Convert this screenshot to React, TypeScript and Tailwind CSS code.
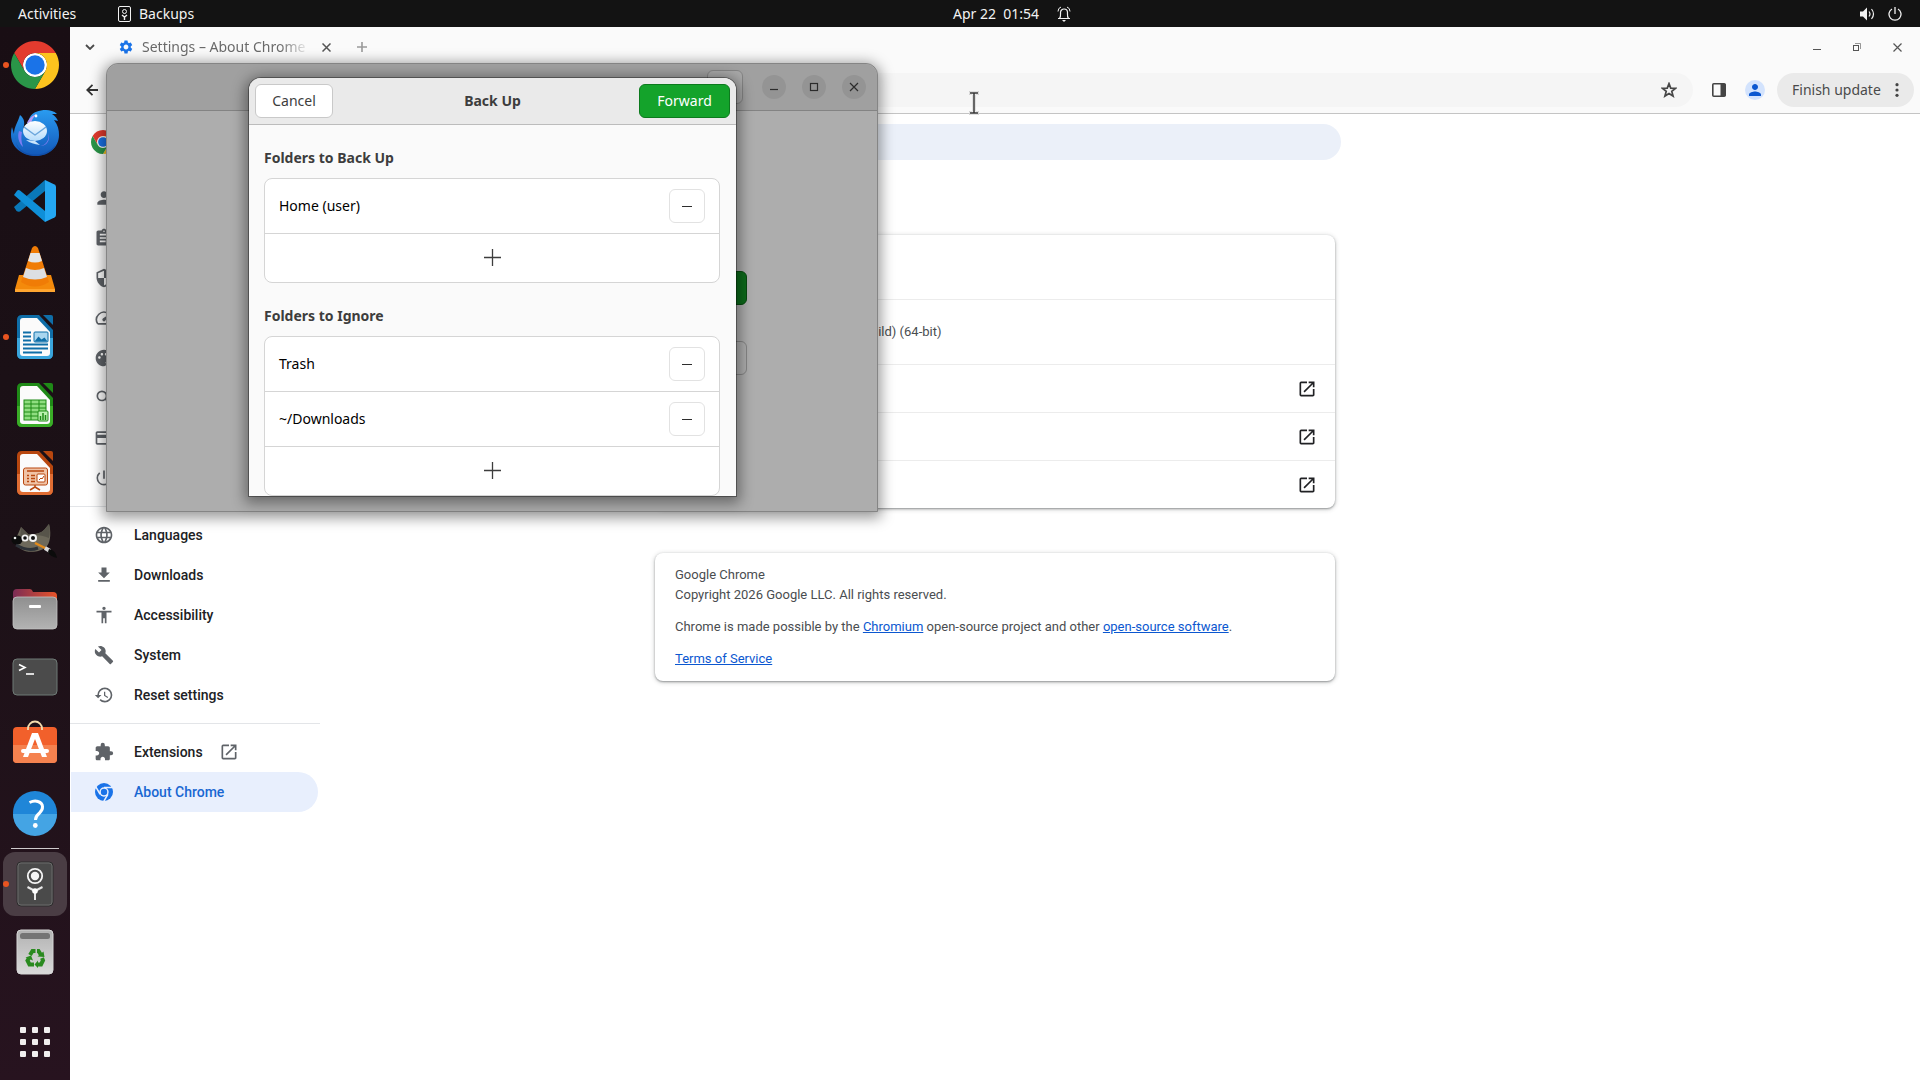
import type { ReactNode } from "react";
import {
  MdAccessibility,
  MdAssignment,
  MdBuild,
  MdCreditCard,
  MdExtension,
  MdFileDownload,
  MdHistory,
  MdLanguage,
  MdOpenInNew,
  MdOutlineSpeed,
  MdPalette,
  MdPerson,
  MdPowerSettingsNew,
  MdSearch,
  MdSecurity,
  MdSettings,
} from "react-icons/md";

/* ---------- Drawings ---------- */

function ChromeLogo({ className }: { className: string }) {
  return (
    <svg viewBox="0 0 48 48" className={className} aria-hidden="true">
      <circle cx="24" cy="24" r="12" fill="#fff" />
      <path d="M24,12H44.78a24,24,0,0,0-41.56,0L13.61,30A12,12,0,0,1,24,12Z" fill="#e33b2e" />
      <path d="M34.39,30,24,48A24,24,0,0,0,44.78,12H24A12,12,0,0,1,34.39,30Z" fill="#fcc31e" />
      <path d="M13.61,30,3.22,12A24,24,0,0,0,24,48L34.39,30a12,12,0,0,1-20.78,0Z" fill="#2a9648" />
      <circle cx="24" cy="24" r="9.7" fill="#1a73e8" />
    </svg>
  );
}

function ChromeMono() {
  return (
    <svg viewBox="0 0 48 48" className="size-[18px]" aria-hidden="true">
      <circle cx="24" cy="24" r="24" fill="#1a73e8" />
      <circle cx="24" cy="24" r="12.5" fill="#e8effd" />
      <path d="M24 12H46M34.4 30L23.4 49M13.6 30L2.6 11" stroke="#e8effd" strokeWidth="4" />
      <circle cx="24" cy="24" r="8.5" fill="#1a73e8" />
    </svg>
  );
}

function ThunderbirdIcon() {
  return (
    <svg viewBox="0 0 48 48" className="size-12">
      <defs>
        <linearGradient id="tb" x1="0" y1="0" x2="0" y2="1">
          <stop offset="0" stopColor="#2a9bf0" />
          <stop offset="1" stopColor="#1257b8" />
        </linearGradient>
        <linearGradient id="tbEnv" x1="0" y1="0" x2="0" y2="1">
          <stop offset="0" stopColor="#ffffff" />
          <stop offset="1" stopColor="#b5dcfb" />
        </linearGradient>
      </defs>
      <path d="M9 6c5 4 5 9 3 14 4-3 5-8 7-12C22 3 28 1 35 1c4 0 8 1 11 4l-5 0c3 2 5 4 6 7l-4-1c4 5 5 10 5 15 0 12-10 21-23 21C11 47 0 38 0 26c0-2 0-5 1-8l2 7C3 18 7 13 9 6z" fill="url(#tb)" />
      <path d="M5 26c-2 9 4 17 14 19 9 2 20-1 26-10-3 8-11 12-21 12C12 47 3 39 5 26z" fill="#0f4aa3" opacity=".65" />
      <path d="M16 14c2-5 6-8 10-9-4 3-5 6-6 9z" fill="#b89cf5" />
      <path d="M8 22c-2 6 0 12 4 16-2-6-2-10-1-15z" fill="#7c7df2" />
      <path d="M29 37c7-1 10-7 8-14 3 8-1 14-8 14z" fill="#8b7df4" />
      <ellipse cx="24" cy="22" rx="12" ry="10" fill="url(#tbEnv)" />
      <path d="M13 18c4 3 8 6 11 8 3-2 7-5 11-8" fill="none" stroke="#6ba6dc" strokeWidth="1.500" />
      <path d="M15 31c4 3 8 4 14 5l-5-4z" fill="#c9e5fb" />
      <circle cx="25" cy="7" r="1.400" fill="#fff" />
    </svg>
  );
}

function VsCodeIcon() {
  return (
    <svg viewBox="0 0 42 42" className="size-[42px]">
      <path d="M31 0 0 27l2.500 4q1.500 1 3.500.5L31 11z" fill="#0a78b8" />
      <path d="M6 10.400 31 31v11L0 15l2.500-3.500Q4 9.500 6 10.400z" fill="#0f8fd8" />
      <path d="M31 0 40.500 4.500Q42 5.300 42 7V35q0 1.700-1.500 2.500L31 42z" fill="#24a7f2" />
    </svg>
  );
}

function VlcIcon() {
  return (
    <svg viewBox="0 0 42 48" className="h-12 w-[42px]">
      <path d="M5 30h32l4 14q0 3-3 3H4q-3 0-3-3z" fill="#f48a0b" />
      <path d="M1 44h40v3H1z" fill="#ffa630" />
      <path d="M7 37 18 3q3-4 6 0l11 34q-14 9-28 0z" fill="#f07c06" />
      <path d="M16.500 8h9l2.500 8q-7 3-14 0z" fill="#e4e6e8" />
      <path d="M12 23q9 4 18 0l3 9q-12 5-24 0z" fill="#dcdfe2" />
    </svg>
  );
}

function LibreIcon({ color, light, children }: { color: string; light: string; children: ReactNode }) {
  return (
    <svg viewBox="0 0 38 46" className="h-[46px] w-[38px]">
      <path d="M6 1H23L37 16V40q0 5-5 5H6q-5 0-5-5V6q0-5 5-5z" fill={color} />
      <path d="M1 24H37V40q0 5-5 5H6q-5 0-5-5z" fill={light} />
      <path d="M7 4H21L34 18V39q0 3-3 3H7q-3 0-3-3V7q0-3 3-3z" fill="#fbfbfb" />
      <path d="M27 1H35q2 0 2 2V11z" fill={color} />
      {children}
    </svg>
  );
}

function WriterIcon() {
  return (
    <LibreIcon color="#0f6ea8" light="#3aa5dc">
      <path d="M7 18.500h8M7 22.500h8M7 26.500h8M7 30.500h25M7 34.500h25M7 38.500h19" stroke="#0f6ea8" strokeWidth="2" />
      <rect x="18" y="18" width="14" height="10" rx="1" fill="#a9d6ef" stroke="#0f6ea8" />
      <path d="M18.500 27.500l4-5 3 3 3-2 3 4z" fill="#0f6ea8" />
    </LibreIcon>
  );
}

function CalcIcon() {
  return (
    <LibreIcon color="#1f8a17" light="#3aad27">
      <rect x="8" y="18" width="22" height="20" fill="#8fdd80" stroke="#1f8a17" />
      <path d="M8 22h22M8 26h22M8 30h22M8 34h22M15 18v20M23 18v20" stroke="#1f8a17" />
      <rect x="22" y="29" width="10" height="10" rx="1" fill="#baf0ae" stroke="#1f8a17" />
      <path d="M24.500 38v-4M27 38v-7M29.500 38v-5" stroke="#1f8a17" strokeWidth="1.500" />
    </LibreIcon>
  );
}

function ImpressIcon() {
  return (
    <LibreIcon color="#b8470f" light="#e06d33">
      <rect x="7.500" y="18" width="24" height="17" rx="2" fill="#f0c3a6" stroke="#b8470f" />
      <path d="M11 21h17M11 25.500h2M11 28.500h2M11 31.500h2M15 25.500h4M15 28.500h4M15 31.500h4" stroke="#b8470f" strokeWidth="1.500" />
      <rect x="21" y="24" width="8" height="8" rx="1" fill="#fff" stroke="#b8470f" />
      <path d="M23 30l2-2 1 1 2-3" stroke="#b8470f" fill="none" />
      <path d="M19 35v2l-5 3M19 37l5 3" stroke="#b8470f" fill="none" strokeWidth="1.500" />
    </LibreIcon>
  );
}

function GimpIcon() {
  return (
    <svg viewBox="0 0 48 36" className="h-9 w-12">
      <path d="M10 4l7 7c5 1 12 0 16-4l5-6c2 7 2 17-2 22-5 6-19 8-26 3-5-3-6-11-3-15z" fill="#6d695b" />
      <path d="M10 4l7 7c5 1 12 0 16-4l5-6c1 5 1 10 0 14-9-4-20-4-29 0z" fill="#57544a" />
      <ellipse cx="6" cy="17" rx="5.500" ry="4.500" fill="#0c0c0c" />
      <circle cx="4" cy="15" r="1.300" fill="#eee" />
      <circle cx="14" cy="15" r="3.500" fill="#f3f3f3" />
      <circle cx="22" cy="15" r="4" fill="#f3f3f3" />
      <circle cx="14" cy="15" r="1.800" fill="#111" />
      <circle cx="22" cy="15" r="2" fill="#111" />
      <path d="M5 22q12 7 22 3" fill="none" stroke="#2d3238" strokeWidth="3" />
      <path d="M24 20l12 6" stroke="#e28a1b" strokeWidth="2.500" />
      <path d="M34 25l5 3" stroke="#d9d9d9" strokeWidth="4" />
      <path d="M38 26c5 1 7 4 8 9-5-1-8-3-9-6z" fill="#0b0b0b" />
    </svg>
  );
}

function FilesIcon() {
  return (
    <svg viewBox="0 0 46 42" className="h-[42px] w-[46px]">
      <defs>
        <linearGradient id="fback" x1="0" x2="1">
          <stop offset="0" stopColor="#7b2c55" />
          <stop offset="1" stopColor="#e8542a" />
        </linearGradient>
        <linearGradient id="ffront" x1="0" x2="0" y1="0" y2="1">
          <stop offset="0" stopColor="#8f8f8f" />
          <stop offset="1" stopColor="#b3b3b3" />
        </linearGradient>
      </defs>
      <path d="M1 16V5q0-4 4-4h13q2 0 3 3h20q4 0 4 4v9z" fill="url(#fback)" />
      <rect x="1" y="9" width="44" height="32" rx="4" fill="url(#ffront)" stroke="#c3c3c3" strokeWidth=".8" />
      <rect x="17" y="17" width="12" height="3" rx="1" fill="#fff" />
    </svg>
  );
}

function TerminalIcon() {
  return (
    <svg viewBox="0 0 46 38" className="h-[38px] w-[46px]">
      <rect x="1" y="1" width="44" height="36" rx="4" fill="#4b4b4b" stroke="#6f7a76" />
      <path d="M7 6.500l6 3-6 3" fill="none" stroke="#fff" strokeWidth="1.600" />
      <path d="M14 16h8" stroke="#fff" strokeWidth="1.600" />
    </svg>
  );
}

function SoftwareIcon() {
  return (
    <svg viewBox="0 0 46 44" className="mb-1.5 h-[44px] w-[46px]">
      <rect x="1" y="7" width="44" height="36" rx="4" fill="#f2602b" />
      <path d="M1 25h44v14q0 4-4 4H5q-4 0-4-4z" fill="#f5824f" />
      <path d="M16 10V8.500a7 7 0 0 1 14 0V10" fill="none" stroke="#f3dcae" strokeWidth="1.800" />
      <path d="M20 13h6l9 24h-5l-7-18-7 18h-5z" fill="#fff" />
      <rect x="9" y="29" width="28" height="4" rx="2" fill="#fff" />
    </svg>
  );
}

function HelpIcon() {
  return (
    <svg viewBox="0 0 46 46" className="size-[46px]">
      <circle cx="23" cy="23" r="22" fill="#1f86d8" />
      <path d="M1 24h44a22 22 0 0 1-44 0z" fill="#44a4e4" />
      <path d="M17.500 12.500q5-2.500 8.500-1c6 2 5.500 8 1.500 11.500-3 2.500-4 4-4 7" fill="none" stroke="#fff" strokeWidth="3" />
      <circle cx="23.300" cy="35.500" r="2.400" fill="#fff" />
    </svg>
  );
}

function SafeIcon() {
  return (
    <svg viewBox="0 0 38 46" className="h-[46px] w-[38px]">
      <rect x="1" y="1" width="36" height="44" rx="4" fill="#4a4a4a" stroke="#2c2c2c" />
      <rect x="2" y="2" width="34" height="42" rx="3" fill="none" stroke="#6a6a6a" />
      <circle cx="19" cy="15" r="7.200" fill="none" stroke="#f5f5f5" strokeWidth="1.800" />
      <circle cx="19" cy="15" r="4.200" fill="#f5f5f5" />
      <path d="M11.500 26l7.500 4 7.500-4M19 30v9" fill="none" stroke="#e6e6e6" strokeWidth="2" />
      <circle cx="19" cy="30" r="2.800" fill="#fff" />
    </svg>
  );
}

function TrashIcon() {
  return (
    <svg viewBox="0 0 38 46" className="h-[46px] w-[38px]">
      <defs>
        <linearGradient id="bin" x1="0" x2="0" y1="0" y2="1">
          <stop offset="0" stopColor="#b2b2b2" />
          <stop offset="1" stopColor="#dadada" />
        </linearGradient>
      </defs>
      <rect x="1" y="1" width="36" height="44" rx="4" fill="url(#bin)" stroke="#d6d6d6" />
      <rect x="4" y="4" width="30" height="6" rx="2.500" fill="#747474" />
      <g fill="none" stroke="#2a8a1f" strokeWidth="4">
        <path d="M14 26l2.500-4h3" />
        <path d="M21 22h1.500l2.500 4" />
        <path d="M26 29l1 2.500-2 4h-3" />
        <path d="M18 35.500h-4.500l-2-4 1.500-2.500" />
      </g>
      <path d="M21.500 27.500l7 .5-1-5.500zM22 31.500v7.500l-3.500-3.500zM9.500 28.500l5.500-2 2 5z" fill="#2a8a1f" />
    </svg>
  );
}

/* ---------- Dock ---------- */

type DockEntry = { name: string; icon: ReactNode; running?: boolean; focused?: boolean };

const pinned: DockEntry[] = [
  { name: "Google Chrome", icon: <ChromeLogo className="size-12" />, running: true },
  { name: "Thunderbird Mail", icon: <ThunderbirdIcon /> },
  { name: "Visual Studio Code", icon: <VsCodeIcon /> },
  { name: "VLC media player", icon: <VlcIcon /> },
  { name: "LibreOffice Writer", icon: <WriterIcon />, running: true },
  { name: "LibreOffice Calc", icon: <CalcIcon /> },
  { name: "LibreOffice Impress", icon: <ImpressIcon /> },
  { name: "GIMP", icon: <GimpIcon /> },
  { name: "Files", icon: <FilesIcon /> },
  { name: "Terminal", icon: <TerminalIcon /> },
  { name: "Software", icon: <SoftwareIcon /> },
  { name: "Help", icon: <HelpIcon /> },
];

const unpinned: DockEntry[] = [
  { name: "Backups", icon: <SafeIcon />, running: true, focused: true },
  { name: "Trash", icon: <TrashIcon /> },
];

function DockButton({ entry }: { entry: DockEntry }) {
  return (
    <div className="relative flex h-[68px] w-full items-center justify-center">
      <button
        aria-label={entry.name}
        className={
          entry.focused
            ? "flex size-16 items-center justify-center rounded-xl bg-[#4a3d44]"
            : "flex size-16 items-center justify-center rounded-xl"
        }
      >
        {entry.icon}
      </button>
      {entry.running && <span className="absolute left-[3px] size-1.5 rounded-full bg-[#e95420]" />}
    </div>
  );
}

function Dock() {
  return (
    <nav aria-label="Dock" className="flex w-[70px] shrink-0 flex-col items-center bg-linear-to-b from-[#190e14] via-[#1c1117] to-[#27131f] pt-1 pb-1">
      {pinned.map((e) => (
        <DockButton key={e.name} entry={e} />
      ))}
      <div className="mt-px mb-px h-px w-12 shrink-0 bg-[#cfcbcd]" />
      {unpinned.map((e) => (
        <DockButton key={e.name} entry={e} />
      ))}
      <button aria-label="Show Applications" className="mt-auto grid size-[68px] shrink-0 grid-cols-[6px_6px_6px] place-content-center gap-1.5">
        {Array.from({ length: 9 }, (_, i) => (
          <span key={i} className="size-1.5 rounded-[1px] bg-[#f0eeee]" />
        ))}
      </button>
    </nav>
  );
}

/* ---------- Top bar ---------- */

function TopBar() {
  return (
    <header className="grid h-[27px] shrink-0 grid-cols-[1fr_auto_1fr] items-center bg-[#131313] text-sm text-[#f2f2f2]">
      <div className="flex items-center pl-[18px]">
        <button className="w-[100px] text-left">Activities</button>
        <button className="flex items-center gap-2">
          <svg viewBox="0 0 13 16" className="h-4 w-[13px]" fill="none" stroke="#f2f2f2">
            <rect x=".5" y=".5" width="12" height="15" rx="1.500" />
            <circle cx="6.500" cy="5.500" r="2" />
            <path d="M4 9l2.500 2L9 9M6.500 11v3" strokeWidth="1.400" />
          </svg>
          Backups
        </button>
      </div>
      <button className="flex items-center gap-[18px] pl-[104px]">
        <span className="whitespace-pre">Apr 22  01:54</span>
        <svg viewBox="0 0 14 16" className="h-4 w-3.5" fill="none" stroke="#f2f2f2">
          <path d="M1 12.500h12M2.500 12.500C4 11 3.500 8 3.500 6.500a3.500 3.500 0 0 1 7 0c0 1.500-.5 4.500 1 6" strokeWidth="1.200" />
          <path d="M1 5.500Q1 2 4 1M13 5.500Q13 2 10 1" />
          <path d="M5 14h4l-2 2z" fill="#f2f2f2" stroke="none" />
        </svg>
      </button>
      <div className="flex items-center justify-end gap-[13px] pr-[18px]">
        <svg viewBox="0 0 15 14" className="h-3.5 w-[15px]">
          <path d="M0 4.500h3L7 .5v13l-4-4H0z" fill="#f2f2f2" />
          <path d="M9 4.500q2 2.500 0 5M11.500 2q4 5 0 10" fill="none" stroke="#f2f2f2" strokeWidth="1.200" />
        </svg>
        <svg viewBox="0 0 14 14" className="size-3.5" fill="none" stroke="#f2f2f2" strokeWidth="1.300">
          <path d="M4 2a6 6 0 1 0 6 0M7 0v7" />
        </svg>
      </div>
    </header>
  );
}

/* ---------- Browser ---------- */

function TabStrip() {
  return (
    <div className="flex h-10 items-center pr-[3px]">
      <button aria-label="Search tabs" className="ml-2 flex w-6 justify-center">
        <svg viewBox="0 0 10 6" className="h-1.5 w-2.5" fill="none" stroke="#4a4a4a" strokeWidth="1.800">
          <path d="M1 1l4 4 4-4" />
        </svg>
      </button>
      <div className="ml-4 flex items-center">
        <MdSettings className="size-4 text-[#1a73e8]" />
        <span className="ml-2 w-[168px] overflow-hidden text-sm whitespace-nowrap text-[#6a6a6a] [mask-image:linear-gradient(to_right,black_82%,transparent)]">
          Settings – About Chrome
        </span>
        <button aria-label="Close tab" className="ml-2 flex w-4 justify-center">
          <svg viewBox="0 0 9 9" className="size-[9px]" stroke="#555" strokeWidth="1.500">
            <path d="M.5.500l8 8M8.500.500l-8 8" />
          </svg>
        </button>
      </div>
      <button aria-label="New tab" className="ml-[23px]">
        <svg viewBox="0 0 10 10" className="size-2.5" stroke="#9a9a9a" strokeWidth="1.600">
          <path d="M5 0v10M0 5h10" />
        </svg>
      </button>
      <div className="ml-auto flex">
        <button aria-label="Minimize" className="flex size-10 items-center justify-center">
          <svg viewBox="0 0 10 10" className="size-2.5" stroke="#555">
            <path d="M1 7.500h8" />
          </svg>
        </button>
        <button aria-label="Restore" className="flex size-10 items-center justify-center">
          <svg viewBox="0 0 10 10" className="size-2.5" fill="none" stroke="#555">
            <rect x="1.500" y="3.500" width="5" height="5" />
            <path d="M3 1.500h5.500V7" strokeOpacity=".6" />
          </svg>
        </button>
        <button aria-label="Close window" className="flex size-10 items-center justify-center">
          <svg viewBox="0 0 9 9" className="size-[9px]" stroke="#555" strokeWidth="1.200">
            <path d="M.5.500l8 8M8.500.500l-8 8" />
          </svg>
        </button>
      </div>
    </div>
  );
}

function Toolbar() {
  return (
    <div className="flex h-[47px] items-center border-b border-[#c4c4c4] pr-1.5">
      <button aria-label="Back" className="ml-4 flex">
        <svg viewBox="0 0 12 12" className="size-3" fill="none" stroke="#333" strokeWidth="1.800">
          <path d="M12 6H1M6.500.800L1.200 6l5.300 5.200" />
        </svg>
      </button>
      <div className="ml-[100px] flex h-[34px] flex-1 items-center rounded-full bg-[#f5f5f5] pr-4">
        <input aria-label="Address bar" className="min-w-0 flex-1 bg-transparent outline-none" />
        <button aria-label="Bookmark this tab">
          <svg viewBox="0 0 24 24" className="size-4" fill="none" stroke="#474747" strokeWidth="2.600">
            <path d="M12 2.500l2.600 6.700 7.200.4-5.600 4.500 1.900 7L12 17.200 5.900 21.100l1.900-7L2.200 9.600l7.200-.4z" />
          </svg>
        </button>
      </div>
      <button aria-label="Side panel" className="ml-[19px]">
        <svg viewBox="0 0 14 14" className="size-3.5">
          <rect x=".8" y=".8" width="12.400" height="12.400" rx="1" fill="none" stroke="#444" strokeWidth="1.600" />
          <path d="M8.500 1h5v12h-5z" fill="#444" />
        </svg>
      </button>
      <button aria-label="Profile" className="ml-[19px] flex size-5 items-center justify-center rounded-full bg-[#d3e3fd]">
        <MdPerson className="size-[18px] text-[#0b57d0]" />
      </button>
      <button className="ml-3 flex h-[34px] w-[137px] items-center justify-between rounded-full bg-[#eaeaea] px-[15px] text-sm text-[#4a4a4a]">
        Finish update
        <svg viewBox="0 0 4 14" className="h-3.5 w-1" fill="#444">
          <circle cx="2" cy="1.700" r="1.600" />
          <circle cx="2" cy="7" r="1.600" />
          <circle cx="2" cy="12.300" r="1.600" />
        </svg>
      </button>
    </div>
  );
}

const coveredItems = [
  { label: "You and Google", Icon: MdPerson },
  { label: "Autofill and passwords", Icon: MdAssignment },
  { label: "Privacy and security", Icon: MdSecurity },
  { label: "Performance", Icon: MdOutlineSpeed },
  { label: "Appearance", Icon: MdPalette },
  { label: "Search engine", Icon: MdSearch },
  { label: "Default browser", Icon: MdCreditCard },
  { label: "On startup", Icon: MdPowerSettingsNew },
];

const advancedItems = [
  { label: "Languages", Icon: MdLanguage },
  { label: "Downloads", Icon: MdFileDownload },
  { label: "Accessibility", Icon: MdAccessibility },
  { label: "System", Icon: MdBuild },
  { label: "Reset settings", Icon: MdHistory },
];

function SettingsMenu() {
  return (
    <aside className="w-[266px] shrink-0 font-[Roboto,sans-serif] text-sm font-medium text-[#202124]">
      <div className="flex h-14 items-center pl-[21px]">
        <ChromeLogo className="size-6" />
      </div>
      <nav aria-label="Settings" className="pt-2">
        {coveredItems.map(({ label, Icon }) => (
          <a key={label} href="#" aria-label={label} className="flex h-10 items-center pl-6">
            <Icon className="size-5 text-[#5f6368]" />
          </a>
        ))}
        <hr className="my-2 w-[250px] border-[#e3e5e8]" />
        {advancedItems.map(({ label, Icon }) => (
          <a key={label} href="#" className="flex h-10 items-center gap-5 pl-6">
            <Icon className="size-5 text-[#5f6368]" />
            {label}
          </a>
        ))}
        <hr className="my-2 w-[250px] border-[#e3e5e8]" />
        <a href="#" className="flex h-10 items-center gap-5 pl-6">
          <MdExtension className="size-5 text-[#5f6368]" />
          Extensions
          <MdOpenInNew className="-ml-1 size-5 text-[#5f6368]" />
        </a>
        <a href="#" className="ml-px flex h-10 w-[247px] items-center gap-[21px] rounded-r-full bg-[#e8effd] pl-6 text-[#1967d2]">
          <ChromeMono />
          About Chrome
        </a>
      </nav>
    </aside>
  );
}

const cardClass = "w-full rounded-lg bg-white shadow-[0_1px_2px_0_rgba(60,64,67,0.45),0_1px_4px_1px_rgba(60,64,67,0.2)]";

function AboutPage() {
  return (
    <main className="flex min-w-0 flex-1 flex-col items-center pt-2.5 font-[Roboto,sans-serif] text-[13px]/5 text-[#4a4d50]">
      <input aria-label="Search settings" className="h-9 w-full max-w-[692px] rounded-full bg-[#ebf0f9] px-5 outline-none" />
      <div className="mt-[75px] flex w-full max-w-[680px] flex-col gap-[45px]">
        <section className={cardClass}>
          <div className="h-16" />
          <div className="flex h-[65px] items-center border-t border-[#ececec] pl-40">(Official Build) (64-bit)</div>
          {["Get help with Chrome", "Report an issue", "Privacy policy"].map((label) => (
            <a key={label} href="#" aria-label={label} className="flex h-12 items-center justify-end border-t border-[#ececec] pr-[18px]">
              <MdOpenInNew className="size-5 text-[#202124]" />
            </a>
          ))}
        </section>
        <section className={cardClass + " flex flex-col gap-3 px-5 py-3"}>
          <p>
            Google Chrome
            <br />
            Copyright 2026 Google LLC. All rights reserved.
          </p>
          <p>
            Chrome is made possible by the{" "}
            <a href="#" className="text-[#0b57d0] underline">Chromium</a> open-source project and other{" "}
            <a href="#" className="text-[#0b57d0] underline">open-source software</a>.
          </p>
          <p>
            <a href="#" className="text-[#0b57d0] underline">Terms of Service</a>
          </p>
        </section>
      </div>
    </main>
  );
}

function Browser() {
  return (
    <div className="flex min-w-0 flex-1 flex-col bg-white">
      <div className="bg-[#fafafa]">
        <TabStrip />
        <Toolbar />
      </div>
      <div className="flex flex-1">
        <SettingsMenu />
        <AboutPage />
        <div className="w-[266px] shrink" />
      </div>
    </div>
  );
}

/* ---------- Backups ---------- */

function WindowControl({ label, children }: { label: string; children: ReactNode }) {
  return (
    <button aria-label={label} className="flex size-6 items-center justify-center rounded-full bg-[#949494]">
      <svg viewBox="0 0 10 10" className="size-2.5" fill="none" stroke="#2c2c2c" strokeWidth="1.200">
        {children}
      </svg>
    </button>
  );
}

function BackupsWindow() {
  return (
    <section
      aria-label="Backups"
      className="absolute top-[63px] left-[106px] flex h-[449px] w-[772px] flex-col rounded-t-xl border border-[#858585] bg-[#adadad] shadow-[0_3px_14px_3px_rgba(0,0,0,0.4)]"
    >
      <header className="flex h-[47px] shrink-0 items-center justify-end gap-4 rounded-t-xl border-b border-[#838383] bg-[#a0a0a0] pr-[11px]">
        <button aria-label="Main menu" className="mr-[3px] h-[34px] w-9 rounded-md border border-[#858585] bg-[#a9a9a9]" />
        <WindowControl label="Minimize">
          <path d="M1 7.500h8" />
        </WindowControl>
        <WindowControl label="Maximize">
          <rect x="1.500" y="1.500" width="7" height="7" />
        </WindowControl>
        <WindowControl label="Close">
          <path d="M1 1l8 8M9 1L1 9" />
        </WindowControl>
      </header>
      <div className="flex flex-col items-end gap-9 pt-40 pr-[130px]">
        <button aria-label="Create first backup" className="h-[34px] w-80 rounded-md border border-[#07490f] bg-[#0c6a1a]" />
        <button aria-label="Restore previous backup" className="h-[34px] w-80 rounded-md border border-[#858585] bg-[#adadad]" />
      </div>
    </section>
  );
}

function FolderList({ title, folders }: { title: string; folders: string[] }) {
  return (
    <section>
      <h2 className="mb-2.5 text-sm/5 font-bold text-[#3d3d3d]">{title}</h2>
      <ul className="divide-y divide-[#d5d5d5] rounded-lg border border-[#d5d5d5] bg-white text-black">
        {folders.map((f) => (
          <li key={f} className="flex items-center justify-between px-3.5 py-2.5">
            {f}
            <button aria-label={"Remove " + f} className="flex h-[34px] w-9 items-center justify-center rounded-md border border-[#e2e2e2]">
              <span className="h-px w-2.5 bg-[#2d2d2d]" />
            </button>
          </li>
        ))}
        <li>
          <button aria-label="Add folder" className="flex h-12 w-full items-center justify-center pb-px">
            <svg viewBox="0 0 17 17" className="size-[17px]" stroke="#3d3d3d" strokeWidth="1.300">
              <path d="M8.500 0v17M0 8.500h17" />
            </svg>
          </button>
        </li>
      </ul>
    </section>
  );
}

function BackUpDialog() {
  return (
    <div
      role="dialog"
      aria-labelledby="dialog-title"
      className="absolute top-[78px] left-[249px] w-[487px] rounded-t-xl bg-[#fafafa] text-sm shadow-[0_0_0_1px_rgba(0,0,0,0.35),0_3px_14px_4px_rgba(0,0,0,0.4)]"
    >
      <header className="grid h-[47px] grid-cols-[1fr_auto_1fr] items-center rounded-t-xl border-b border-[#bcbcbc] bg-[#eaeaea] px-1.5">
        <button className="h-[34px] w-[78px] rounded-md border border-[#c9c9c9] bg-white text-[#3d3d3d]">Cancel</button>
        <h1 id="dialog-title" className="font-bold text-[#3d3d3d]">Back Up</h1>
        <button className="h-[34px] w-[91px] justify-self-end rounded-md border border-[#0c7a1d] bg-[#14a32b] text-white">Forward</button>
      </header>
      <div className="flex flex-col gap-[23px] pt-[23px] pr-4 pl-[15px]">
        <FolderList title="Folders to Back Up" folders={["Home (user)"]} />
        <FolderList title="Folders to Ignore" folders={["Trash", "~/Downloads"]} />
      </div>
    </div>
  );
}

function TextCursor() {
  return (
    <svg viewBox="0 0 12 26" className="absolute top-[90px] left-[968px] h-[26px] w-3" fill="none">
      <path d="M1 3h10M6 3v20M1 23h10" stroke="#8a8a8a" strokeWidth="4" opacity=".5" />
      <path d="M1.500 3h9M6 3v20M1.500 23h9" stroke="#fff" strokeWidth="3" />
      <path d="M2 3h8M6 3v20M2 23h8" stroke="#333" strokeWidth="1.500" />
    </svg>
  );
}

export default function App() {
  return (
    <div className="relative flex min-h-screen flex-col overflow-hidden font-['Noto_Sans',sans-serif]">
      <TopBar />
      <div className="flex flex-1">
        <Dock />
        <Browser />
      </div>
      <BackupsWindow />
      <BackUpDialog />
      <TextCursor />
    </div>
  );
}
